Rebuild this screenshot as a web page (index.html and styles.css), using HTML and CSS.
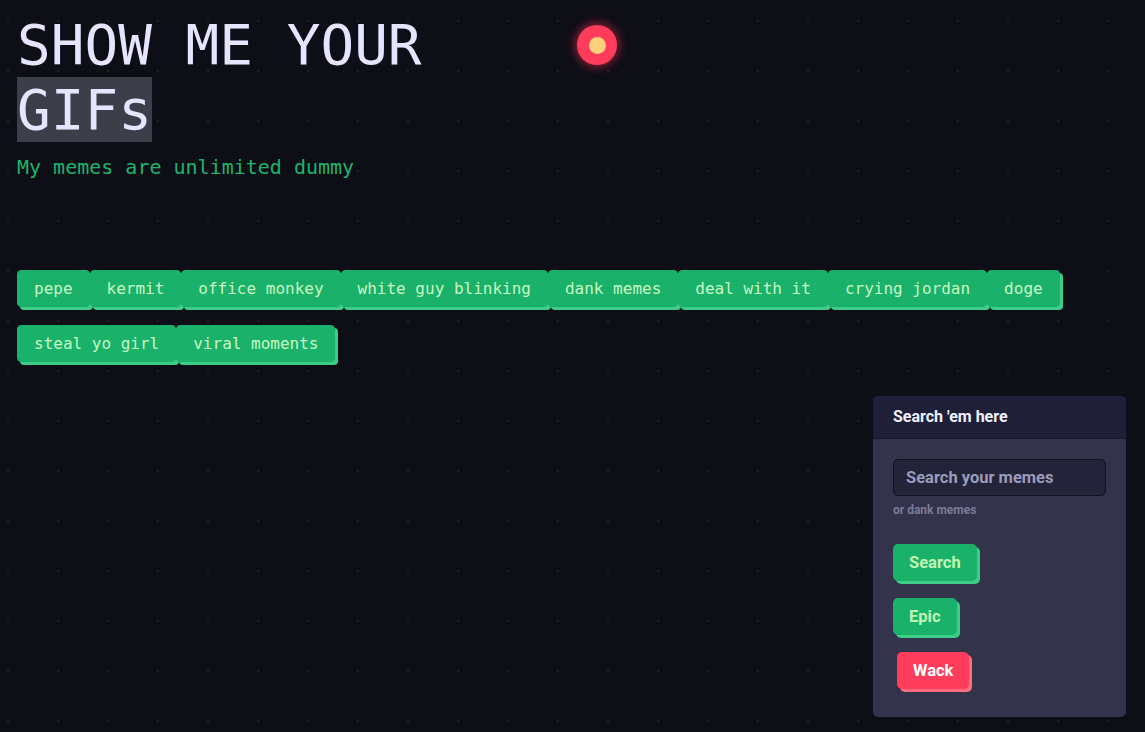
FILE: index.html
```html
<!DOCTYPE html>
<html lang="en">
<head>
<meta charset="utf-8">
<title>Show me your GIFs</title>
<link rel="stylesheet" href="styles.css">
</head>
<body>
<div class="page">
  <header class="hero">
    <h1 class="title">SHOW ME YOUR <span class="hl">GIFs</span></h1>
    <div class="rec"><div class="rec-core"></div></div>
  </header>
  <p class="subtitle">My memes are unlimited dummy</p>

  <div class="tags">
    <button class="tag">pepe</button>
    <button class="tag">kermit</button>
    <button class="tag">office monkey</button>
    <button class="tag">white guy blinking</button>
    <button class="tag">dank memes</button>
    <button class="tag">deal with it</button>
    <button class="tag">crying jordan</button>
    <button class="tag">doge</button>
    <button class="tag">steal yo girl</button>
    <button class="tag">viral moments</button>
  </div>

  <div class="panel-row">
    <section class="panel">
      <div class="panel-head">Search 'em here</div>
      <div class="panel-body">
        <input class="search-input" type="text" placeholder="Search your memes">
        <div class="hint">or dank memes</div>
        <div class="actions">
          <button class="btn btn-green">Search</button>
          <button class="btn btn-green">Epic</button>
          <button class="btn btn-red btn-shift">Wack</button>
        </div>
      </div>
    </section>
  </div>
</div>
</body>
</html>
```

FILE: styles.css
```css
html {
  background-color: #0e0e17;
  background-image: radial-gradient(circle at 1px 1px, #1f202b 0.9px, transparent 1.4px);
  background-size: 50px 50px;
  background-position: 7px 20px;
  min-height: 100%;
}

body {
  margin: 0;
  font-family: "DejaVu Sans Mono", monospace;
  color: #e6e4ff;
}

.page {
  padding: 12px 19px 0 17px;
}

.hero {
  display: flex;
  align-items: flex-start;
}

.title {
  width: 520px;
  margin: 0;
  font-family: "DejaVu Sans Mono", monospace;
  font-size: 56px;
  font-weight: normal;
  line-height: normal;
  color: #e6e4ff;
}

.hl {
  background: #3e3e4a;
}

.rec {
  margin-left: 40px;
  margin-top: 13px;
  width: 40px;
  height: 40px;
  border-radius: 50%;
  background: #ff3c5c;
  box-shadow: 0 0 10px 2px rgba(255, 50, 80, 0.55);
  display: flex;
  align-items: center;
  justify-content: center;
}

.rec-core {
  width: 17px;
  height: 17px;
  border-radius: 50%;
  background: #fdd07c;
}

.subtitle {
  margin: 12.5px 0 0;
  font-size: 20px;
  line-height: normal;
  color: #1db46c;
}

.tags {
  display: flex;
  flex-wrap: wrap;
  row-gap: 17.5px;
  margin-top: 91.5px;
}

.tag {
  font-family: "DejaVu Sans Mono", monospace;
  font-size: 16px;
  line-height: 19px;
  padding: 8px 16px;
  border: 1px solid #1ab16b;
  border-radius: 4px;
  background: #1ab16b;
  color: #c8f7c2;
  box-shadow: 3px 3px 0 #3dcd87;
  cursor: pointer;
}

.panel-row {
  display: flex;
  justify-content: flex-end;
  margin-top: 34px;
}

.panel {
  width: 253px;
  border-radius: 5px;
  overflow: hidden;
  background: #33334b;
  font-family: Roboto, "Liberation Sans", sans-serif;
}

.panel-head {
  height: 43px;
  box-sizing: border-box;
  padding: 0 20px;
  display: flex;
  align-items: center;
  background: #1f2037;
  border-bottom: 1px solid #16172a;
  font-size: 16px;
  font-weight: bold;
  color: #eef0ff;
}

.panel-body {
  padding: 20px 20px 28px 20px;
}

.search-input {
  display: block;
  width: 100%;
  box-sizing: border-box;
  height: 37px;
  padding: 0 12px;
  border: 1px solid #12121f;
  border-radius: 5px;
  background: #23233a;
  font-family: Roboto, "Liberation Sans", sans-serif;
  font-size: 16.5px;
  font-weight: bold;
  color: #e6e4ff;
  outline: none;
}

.search-input::placeholder {
  color: #9c9cba;
}

.hint {
  margin-top: 7px;
  font-size: 12px;
  font-weight: bold;
  line-height: 14px;
  color: #7c7c99;
}

.actions {
  margin-top: 27px;
  display: flex;
  flex-direction: column;
  align-items: flex-start;
  gap: 17px;
}

.btn {
  height: 37px;
  padding: 0 16px;
  border: none;
  border-radius: 5px;
  font-family: Roboto, "Liberation Sans", sans-serif;
  font-size: 16.5px;
  font-weight: bold;
  cursor: pointer;
}

.btn-green {
  background: #1ab16b;
  color: #c2f7b4;
  box-shadow: 3px 3px 0 #3dcd87;
}

.btn-red {
  background: #ff3c5c;
  color: #ffffff;
  box-shadow: 3px 3px 0 #ff6e7e;
}

.btn-shift {
  margin-left: 4px;
}
```
